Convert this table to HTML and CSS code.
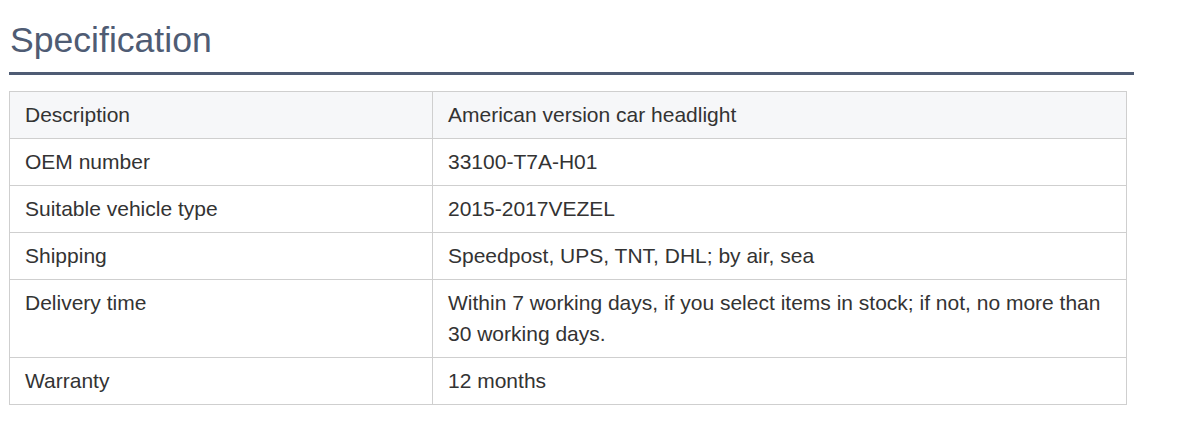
FILE: index.html
```html
<!DOCTYPE html>
<html>
<head>
<meta charset="utf-8">
<link rel="stylesheet" href="styles.css">
</head>
<body>
<div class="spec">
  <h2 class="spec-title">Specification</h2>
  <table class="spec-table">
    <colgroup><col class="c1"><col class="c2"></colgroup>
    <tbody>
      <tr class="shade"><td>Description</td><td>American version car headlight</td></tr>
      <tr><td>OEM number</td><td>33100-T7A-H01</td></tr>
      <tr><td>Suitable vehicle type</td><td>2015-2017VEZEL</td></tr>
      <tr><td>Shipping</td><td>Speedpost, UPS, TNT, DHL; by air, sea</td></tr>
      <tr><td>Delivery time</td><td>Within 7 working days, if you select items in stock; if not, no more than 30 working days.</td></tr>
      <tr><td>Warranty</td><td>12 months</td></tr>
    </tbody>
  </table>
</div>
</body>
</html>
```
FILE: styles.css
```css
html, body { margin: 0; padding: 0; background: #fff; }
body { font-family: "Liberation Sans", Arial, sans-serif; color: #333; }
.spec { padding: 18px 0 0 9px; width: 1125px; }
.spec-title {
  margin: 0;
  font-weight: normal;
  font-size: 35.6px;
  line-height: 44px;
  color: #4f5c74;
  padding-bottom: 10px;
  border-bottom: 3px solid #4f5c74;
  padding-left: 1px;
}
.spec-table {
  margin-top: 16px;
  width: 1118px;
  border-collapse: collapse;
  font-size: 21px;
  line-height: 31px;
  table-layout: fixed;
}
.c1 { width: 423px; }
.spec-table td {
  border: 1px solid #cfcfcf;
  padding: 7px 15px 8px;
  vertical-align: top;
}
.shade td { background: #f6f7f9; }
```
